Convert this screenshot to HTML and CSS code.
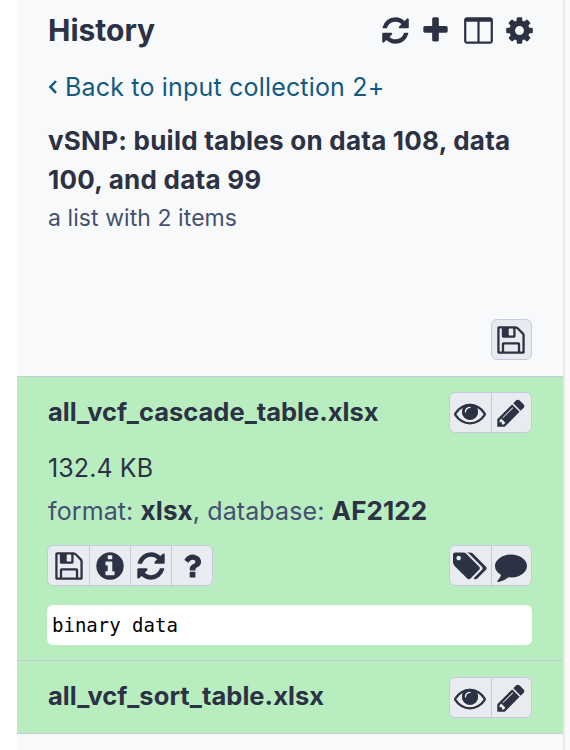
FILE: index.html
```html
<!DOCTYPE html>
<html lang="en">
<head>
<meta charset="utf-8">
<title>History</title>
<link rel="stylesheet" href="styles.css">
</head>
<body>
<svg class="sprite" aria-hidden="true">
<symbol id="refresh" viewBox="0 0 1792 1792"><path d="M1639 1056q0 5-1 7-64 268-268 434.5t-478 166.5q-146 0-282.5-55t-243.5-157l-129 129q-19 19-45 19t-45-19-19-45v-448q0-26 19-45t45-19h448q26 0 45 19t19 45-19 45l-137 137q71 66 161 102t187 36q134 0 250-65t186-179q11-17 53-117 8-23 30-23h192q13 0 22.5 9.5t9.5 22.5zm25-800v448q0 26-19 45t-45 19h-448q-26 0-45-19t-19-45 19-45l138-138q-148-137-349-137-134 0-250 65t-186 179q-11 17-53 117-8 23-30 23h-199q-13 0-22.5-9.5t-9.5-22.5v-7q65-268 270-434.5t480-166.5q146 0 284 55.5t245 156.5l130-129q19-19 45-19t45 19 19 45z"/></symbol>
<symbol id="plus" viewBox="0 0 1792 1792"><path d="M1600 736v192q0 40-28 68t-68 28h-416v416q0 40-28 68t-68 28h-192q-40 0-68-28t-28-68v-416h-416q-40 0-68-28t-28-68v-192q0-40 28-68t68-28h416v-416q0-40 28-68t68-28h192q40 0 68 28t28 68v416h416q40 0 68 28t28 68z"/></symbol>
<symbol id="columns" viewBox="0 0 1792 1792"><path d="M224 1536h608v-1152h-640v1120q0 13 9.5 22.5t22.5 9.5zm1376-32v-1120h-640v1152h608q13 0 22.5-9.5t9.5-22.5zm128-1216v1216q0 66-47 113t-113 47h-1344q-66 0-113-47t-47-113v-1216q0-66 47-113t113-47h1344q66 0 113 47t47 113z"/></symbol>
<symbol id="cog" viewBox="0 0 1792 1792"><path d="M1152 896q0-106-75-181t-181-75-181 75-75 181 75 181 181 75 181-75 75-181zm512-109v222q0 12-8 23t-20 13l-185 28q-19 54-39 91 35 50 107 138 10 12 10 25t-9 23q-27 37-99 108t-94 71q-12 0-26-9l-138-108q-44 23-91 38-16 136-29 186-7 28-36 28h-222q-14 0-24.5-8.5t-11.5-21.5l-28-184q-49-16-90-37l-141 107q-10 9-25 9-14 0-25-11-126-114-165-168-7-10-7-23 0-12 8-23 15-21 51-66.5t54-70.5q-27-50-41-99l-183-27q-13-2-21-12.5t-8-23.5v-222q0-12 8-23t19-13l186-28q14-46 39-92-40-57-107-138-10-12-10-24 0-10 9-23 26-36 98.5-107.5t94.5-71.5q13 0 26 10l138 107q44-23 91-38 16-136 29-186 7-28 36-28h222q14 0 24.5 8.5t11.5 21.5l28 184q49 16 90 37l142-107q9-9 24-9 13 0 25 10 129 119 165 170 7 8 7 22 0 12-8 23-15 21-51 66.5t-54 70.5q26 50 41 98l183 28q13 2 21 12.5t8 23.5z"/></symbol>
<symbol id="save" viewBox="0 0 1792 1792"><path d="M512 1536h768v-384h-768v384zm896 0h128v-896q0-14-10-38.5t-20-34.5l-281-281q-10-10-34-20t-39-10v416q0 40-28 68t-68 28h-576q-40 0-68-28t-28-68v-416h-128v1280h128v-416q0-40 28-68t68-28h832q40 0 68 28t28 68v416zm-384-928v-320q0-13-9.5-22.5t-22.5-9.5h-192q-13 0-22.5 9.5t-9.5 22.5v320q0 13 9.5 22.5t22.5 9.5h192q13 0 22.5-9.5t9.5-22.5zm640 32v928q0 40-28 68t-68 28h-1344q-40 0-68-28t-28-68v-1344q0-40 28-68t68-28h928q40 0 88 20t76 48l280 280q28 28 48 76t20 88z"/></symbol>
<symbol id="eye" viewBox="0 0 1792 1792"><path d="M1664 960q-152-236-381-353 61 104 61 225 0 185-131.5 316.5t-316.5 131.5-316.5-131.5-131.5-316.5q0-121 61-225-229 117-381 353 133 205 333.5 326.5t434.5 121.5 434.5-121.5 333.5-326.5zm-720-384q0-20-14-34t-34-14q-125 0-214.5 89.5t-89.5 214.5q0 20 14 34t34 14 34-14 14-34q0-86 61-147t147-61q20 0 34-14t14-34zm848 384q0 34-20 69-140 230-376.5 368.5t-499.5 138.5-499.5-139-376.5-368q-20-35-20-69t20-69q140-229 376.5-368t499.5-139 499.5 139 376.5 368q20 35 20 69z"/><path d="M896 1280A448 448 0 1 1 896 384A448 448 0 1 1 896 1280ZM944 576q0-20-14-34t-34-14q-125 0-214.5 89.5t-89.5 214.5q0 20 14 34t34 14 34-14 14-34q0-86 61-147t147-61q20 0 34-14t14-34z" fill-rule="evenodd"/></symbol>
<symbol id="pencil" viewBox="0 0 1792 1792"><path d="M491 1536l91-91-235-235-91 91v107h128v128h107zm523-928q0-22-22-22-10 0-17 7l-542 542q-7 7-7 17 0 22 22 22 10 0 17-7l542-542q7-7 7-17zm-54-192l416 416-832 832h-416v-416zm683 96q0 53-37 90l-166 166-416-416 166-165q36-38 90-38 53 0 91 38l235 234q37 39 37 91z"/></symbol>
<symbol id="info" viewBox="0 0 1792 1792"><path d="M1152 1376v-160q0-14-9-23t-23-9h-96v-512q0-14-9-23t-23-9h-320q-14 0-23 9t-9 23v160q0 14 9 23t23 9h96v320h-96q-14 0-23 9t-9 23v160q0 14 9 23t23 9h448q14 0 23-9t9-23zm-128-896v-160q0-14-9-23t-23-9h-192q-14 0-23 9t-9 23v160q0 14 9 23t23 9h192q14 0 23-9t9-23zm640 416q0 209-103 385.5t-279.5 279.5-385.5 103-385.5-103-279.5-279.5-103-385.5 103-385.5 279.5-279.5 385.5-103 385.5 103 279.5 279.5 103 385.5z"/></symbol>
<symbol id="question" viewBox="0 0 1792 1792"><path d="M1088 1256v240q0 16-12 28t-28 12h-240q-16 0-28-12t-12-28v-240q0-16 12-28t28-12h240q16 0 28 12t12 28zm316-600q0 54-15.5 101t-35 76.5-55 59.5-57.5 43.5-61 35.5q-41 23-68.5 65t-27.5 67q0 17-12 32.5t-28 15.5h-240q-15 0-25.5-18.5t-10.5-37.5v-45q0-83 65-156.5t143-108.5q59-27 84-56t25-76q0-42-46.5-74t-107.5-32q-65 0-108 29-35 25-107 115-13 16-31 16-12 0-25-8l-164-125q-13-10-15.5-25t5.5-28q160-266 464-266 80 0 161 31t146 83 106 127.5 41 158.5z"/></symbol>
<symbol id="tags" viewBox="0 0 1920 1792"><path d="M448 448q0-53-37.5-90.5t-90.5-37.5-90.5 37.5-37.5 90.5 37.5 90.5 90.5 37.5 90.5-37.5 37.5-90.5zm1067 576q0 53-37 90l-491 492q-39 37-91 37-53 0-90-37l-715-716q-38-37-64.5-101t-26.5-117v-416q0-52 38-90t90-38h416q53 0 117 26.5t102 64.5l715 714q37 39 37 91zm384 0q0 53-37 90l-491 492q-39 37-91 37-36 0-59-14t-53-45l470-470q37-37 37-90 0-52-37-91l-715-714q-38-38-102-64.5t-117-26.5h224q53 0 117 26.5t102 64.5l715 714q37 39 37 91z"/></symbol>
<symbol id="comment" viewBox="0 0 1792 1792"><path d="M1792 896q0 174-120 321.5t-326 233-450 85.5q-70 0-145-8-198 175-460 242-49 14-114 22-17 2-30.5-9t-17.5-29v-1q-3-4-.5-12t2-10 4.5-9.5l6-9 7-8.5 8-9q7-8 31-34.5t34.5-38 31-39.5 32.5-51 27-59 26-76q-157-89-247.5-220t-90.5-281q0-130 71-248.5t191-204.5 286-136.5 348-50.5 348 50.5 286 136.5 191 204.5 71 248.5z"/></symbol>
</svg>
<main class="panel">
  <header class="top">
    <h1>History</h1>
    <nav class="tools">
      <svg><use href="#refresh"/></svg>
      <svg class="add"><use href="#plus"/></svg>
      <svg><use href="#columns"/></svg>
      <svg><use href="#cog"/></svg>
    </nav>
  </header>
  <a class="back"><svg class="angle" viewBox="0 0 10 16"><path d="M8 2L2.4 7.9L8 13.8"/></svg>Back to input collection 2+</a>
  <h2>vSNP: build tables on data 108, data<br>100, and data 99</h2>
  <p class="kind">a list with 2 items</p>
  <div class="download"><div class="group narrow"><button><svg><use href="#save"/></svg></button></div></div>
  <section class="item">
    <div class="row">
      <h3>all_vcf_cascade_table.xlsx</h3>
      <div class="group narrow"><button><svg><use href="#eye"/></svg></button><button><svg><use href="#pencil"/></svg></button></div>
    </div>
    <p class="size">132.4 KB</p>
    <p class="meta">format: <b>xlsx</b>, database: <b>AF2122</b></p>
    <div class="row actions">
      <div class="group"><button><svg><use href="#save"/></svg></button><button><svg><use href="#info"/></svg></button><button><svg><use href="#refresh"/></svg></button><button><svg><use href="#question"/></svg></button></div>
      <div class="group narrow"><button><svg class="wide"><use href="#tags"/></svg></button><button><svg><use href="#comment"/></svg></button></div>
    </div>
    <pre>binary data</pre>
  </section>
  <section class="item short">
    <div class="row">
      <h3>all_vcf_sort_table.xlsx</h3>
      <div class="group narrow"><button><svg><use href="#eye"/></svg></button><button><svg><use href="#pencil"/></svg></button></div>
    </div>
  </section>
</main>
</body>
</html>
```
FILE: styles.css
```css
* { box-sizing: border-box; }
body { margin: 0; height: 750px; overflow: hidden; display: flex; background: #fff; color: #2c3143; font-family: Inter, "Liberation Sans", sans-serif; }
body::after { content: ""; flex: 1; background: #fafafa; }
h1, h2, h3, p, pre { margin: 0; white-space: nowrap; }
svg { fill: currentColor; }
.sprite { position: absolute; width: 0; height: 0; }
.panel { flex: none; margin-left: 17px; width: 548px; height: 750px; background: #f8f9fb; border-right: 2px solid #e8e8e9; display: flex; flex-direction: column; }
.top { display: flex; justify-content: space-between; height: 60px; padding: 0 28px 0 31px; align-items: center; }
h1 { font-size: 30px; font-weight: 700; line-height: 60px; }
.tools { display: flex; gap: 10.3px; }
.tools svg { width: 31px; height: 31px; }
.tools .add { margin: 0 1px 0 -1px; }
.back { display: flex; align-items: center; height: 54px; padding-left: 31px; color: #145980; font-size: 25px; letter-spacing: .18px; }
.angle { width: 10px; height: 16px; margin-right: 7px; fill: none; stroke: currentColor; stroke-width: 2.5; }
h2 { padding-left: 31px; padding-top: 8px; font-size: 26px; font-weight: 700; line-height: 38.5px; letter-spacing: .24px; }
.kind { padding-left: 31px; font-size: 23px; line-height: 38px; color: #465070; letter-spacing: .07px; }
.download { margin-top: auto; height: 57px; padding-right: 31px; display: flex; justify-content: flex-end; align-items: flex-start; }
.group { display: flex; border: 1px solid #c8c9df; border-radius: 6px; background: #e8ebef; overflow: hidden; }
.group button { width: 41px; height: 39px; padding: 0; border: 0; background: none; color: inherit; display: flex; align-items: center; justify-content: center; }
.group.narrow button { width: 40.5px; }
.download .group.narrow button { width: 39.5px; }
.group button + button { border-left: 1px solid #c8c9df; }
.group svg { width: 32px; height: 32px; flex: none; }
.group .wide { width: 34px; }
.item { flex: none; height: 284px; border-top: 1px solid #c5cbd8; background: #b8edc0; padding: 15px 31px 0 30px; }
.short { height: 74px; margin-bottom: 16px; padding-top: 16px; border-bottom: 1px solid #c5cbd8; }
.row { display: flex; justify-content: space-between; align-items: flex-start; height: 42px; }
h3 { padding-left: 1px; font-size: 25.5px; font-weight: 700; line-height: 40px; }
.short h3 { line-height: 38px; letter-spacing: .05px; }
.size { margin-top: 13px; padding-left: 1px; font-size: 25px; line-height: 42px; letter-spacing: .1px; }
.meta { padding-left: 1px; font-size: 25px; line-height: 44px; color: #465070; letter-spacing: .11px; }
.meta b { color: #2c3143; font-size: 26px; }
.actions { margin-top: 12px; }
pre { margin-top: 18px; height: 40px; padding-left: 5px; background: #fff; border-radius: 6px; color: #000; font: 19px/40px "DejaVu Sans Mono", monospace; }
```
